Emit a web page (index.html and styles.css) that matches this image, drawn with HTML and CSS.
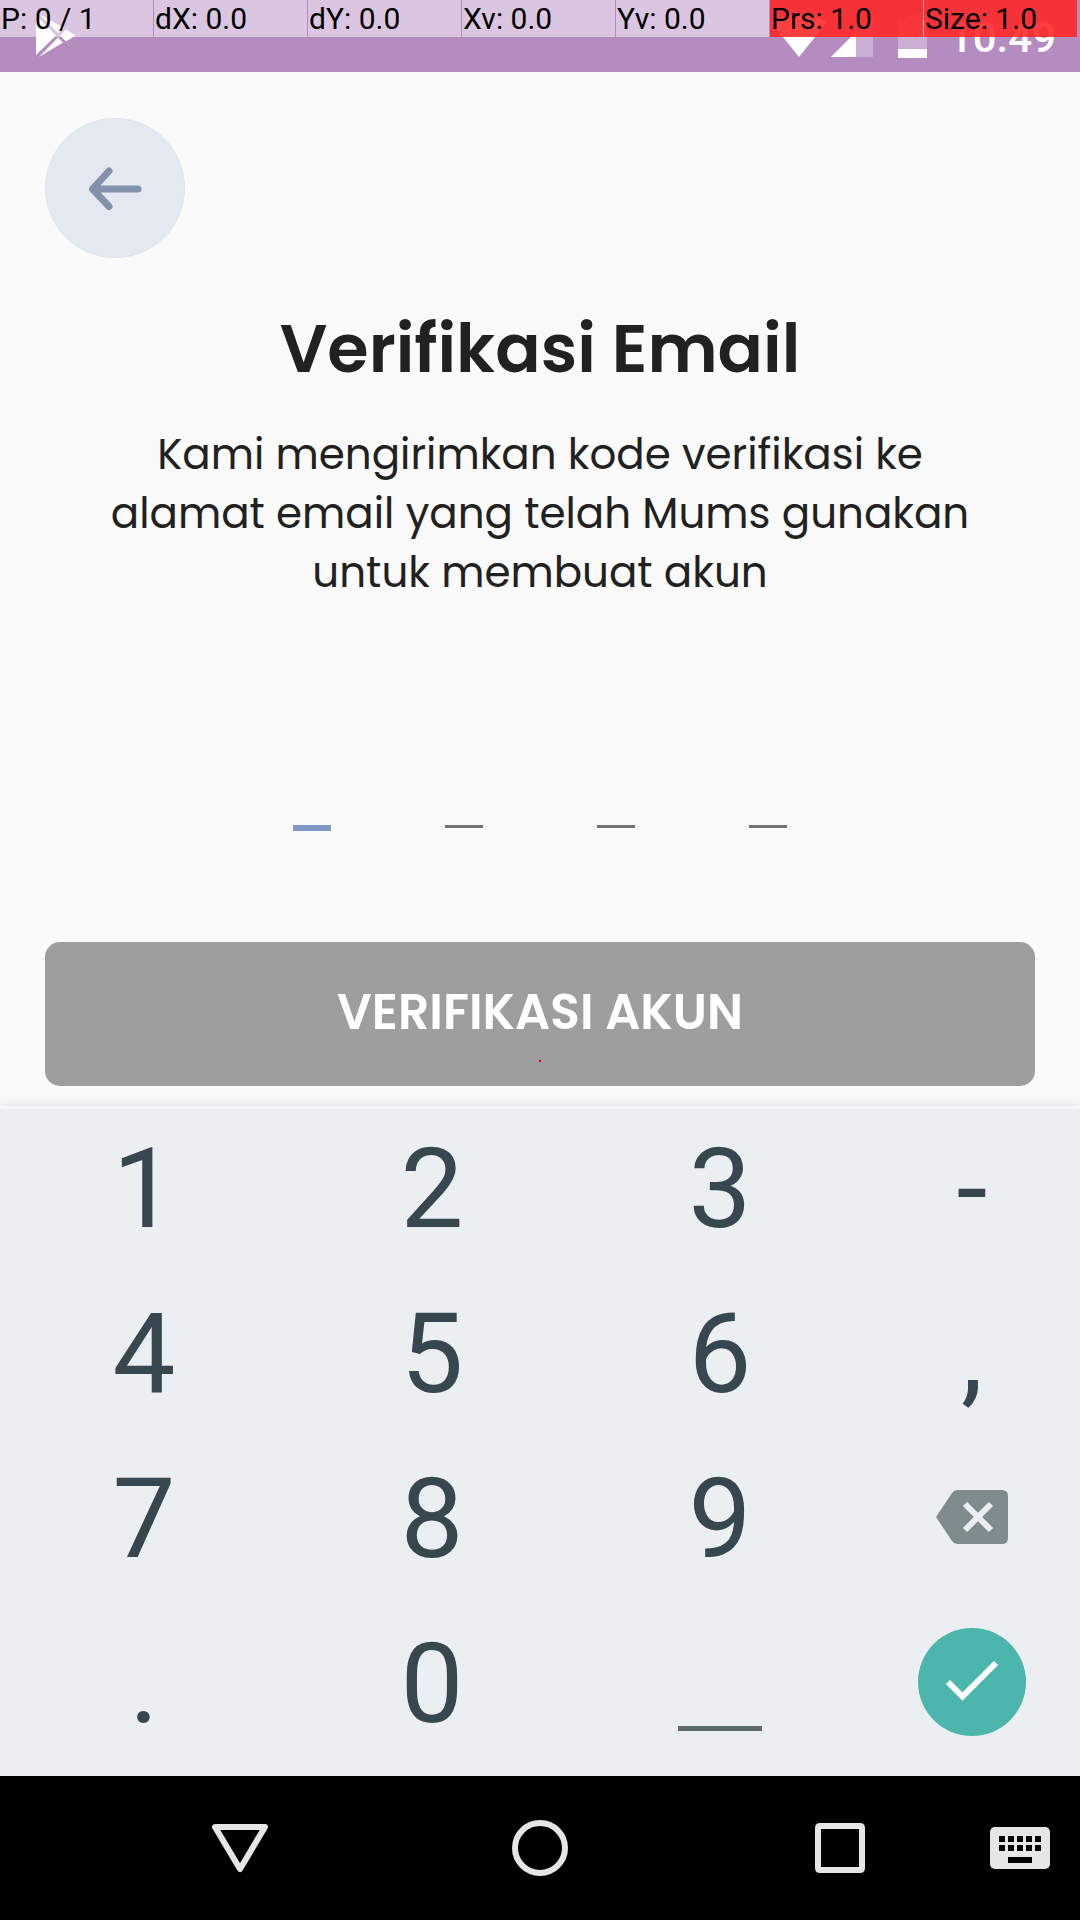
FILE: index.html
```html
<!DOCTYPE html>
<html lang="id">
<head>
<meta charset="utf-8">
<meta name="viewport" content="width=device-width, initial-scale=1">
<title>Verifikasi Email</title>
<link rel="stylesheet" href="styles.css">
</head>
<body>
<header class="status">
  <svg class="status-app" width="40" height="44" viewBox="0 0 40 44" fill="#fff" aria-hidden="true">
    <path d="M0 1v40L20 21.500zM3 0L22 19l6-5zM24 21.500l6 6 8-5q2-1 0-2l-8-5zM3 43l19-19.500 5 5z"/>
  </svg>
  <div class="status-icons">
    <svg width="56" height="44" viewBox="0 0 56 44" aria-hidden="true"><path d="M28 43L0 8Q28-8 56 8z" fill="#fff"/></svg>
    <svg class="status-signal" width="42" height="44" viewBox="0 0 42 44" aria-hidden="true"><path d="M0 43L42 1v42z" fill="#fff" opacity=".3"/><path d="M0 43L25 18v25z" fill="#fff"/></svg>
    <svg class="status-battery" width="29" height="44" viewBox="0 0 29 44" aria-hidden="true"><path d="M0 5h8V1h13v4h8v39H0z" fill="#fff" opacity=".3"/><path d="M0 35h29v9H0z" fill="#fff"/></svg>
    <span class="clock">10.49</span>
  </div>
  <div class="pointer-bar">
    <span>P: 0 / 1</span><span>dX: 0.0</span><span>dY: 0.0</span><span>Xv: 0.0</span><span>Yv: 0.0</span><span class="level">Prs: 1.0</span><span class="level">Size: 1.0</span>
  </div>
</header>

<main class="content">
  <button class="back" type="button" aria-label="Kembali">
    <svg width="54" height="44" viewBox="0 0 54 44" fill="none" stroke="#8292aa" stroke-width="7" stroke-linecap="round" stroke-linejoin="round" aria-hidden="true"><path d="M50 23H5M21 5L4.500 23 21 40.500"/><path d="M5 23l6-5v10z" fill="#8292aa" stroke-width="2"/></svg>
  </button>
  <h1 class="title">Verifikasi Email</h1>
  <p class="lead">Kami mengirimkan kode verifikasi ke<br>alamat email yang telah Mums gunakan<br>untuk membuat akun</p>
  <form class="form">
    <div class="code">
      <input class="digit digit-active" type="text" inputmode="numeric" maxlength="1" aria-label="Digit 1">
      <input class="digit" type="text" inputmode="numeric" maxlength="1" aria-label="Digit 2">
      <input class="digit" type="text" inputmode="numeric" maxlength="1" aria-label="Digit 3">
      <input class="digit" type="text" inputmode="numeric" maxlength="1" aria-label="Digit 4">
    </div>
    <button class="submit" type="submit">VERIFIKASI AKUN<span class="touch-dot"></span></button>
  </form>
</main>

<section class="keyboard" aria-label="Papan angka">
  <button type="button">1</button><button type="button">2</button><button type="button">3</button><button type="button">-</button>
  <button type="button">4</button><button type="button">5</button><button type="button">6</button><button type="button">,</button>
  <button type="button">7</button><button type="button">8</button><button type="button">9</button>
  <button class="icon-key" type="button" aria-label="Hapus">
    <svg width="72" height="54" viewBox="0 0 72 54" aria-hidden="true"><path d="M21 0h45q6 0 6 6v42q0 6-6 6H21q-3 0-5-3L0 27 16 3q2-3 5-3z" fill="#808b8f"/><path d="M29 14l26 26M55 14L29 40" stroke="#eceff1" stroke-width="6"/></svg>
  </button>
  <button type="button">.</button><button type="button">0</button>
  <button type="button" aria-label="Spasi"><span class="space"></span></button>
  <button class="icon-key" type="button" aria-label="Selesai">
    <svg width="108" height="108" viewBox="0 0 108 108" aria-hidden="true"><circle cx="54" cy="54" r="54" fill="#4db6ac"/><path d="M30 54l14.500 14.500L78 35" fill="none" stroke="#fff" stroke-width="6"/></svg>
  </button>
</section>

<nav class="navbar" aria-label="Navigasi sistem">
  <button type="button" aria-label="Tutup"><svg width="56" height="56" viewBox="0 0 56 56" fill="none" stroke="#e6e6e6" stroke-width="6" stroke-linejoin="round" aria-hidden="true"><path d="M3 7h50L28 49z"/></svg></button>
  <button type="button" aria-label="Beranda"><svg width="56" height="56" viewBox="0 0 56 56" fill="none" stroke="#e6e6e6" stroke-width="6" aria-hidden="true"><circle cx="28" cy="28" r="25"/></svg></button>
  <button type="button" aria-label="Terbaru"><svg width="50" height="50" viewBox="0 0 50 50" aria-hidden="true"><path fill="#e6e6e6" fill-rule="evenodd" d="M5 0h40q5 0 5 5v40q0 5-5 5H5q-5 0-5-5V5q0-5 5-5zM6 6v38h38V6z"/></svg></button>
  <button type="button" aria-label="Ganti papan ketik"><svg width="60" height="42" viewBox="0 0 60 42" aria-hidden="true"><rect width="60" height="42" rx="5" fill="#e6e6e6"/><path d="M9 9h6v6H9zM18 9h6v6h-6zM27 9h6v6h-6zM36 9h6v6h-6zM45 9h6v6h-6zM9 18h6v6H9zM18 18h6v6h-6zM27 18h6v6h-6zM36 18h6v6h-6zM45 18h6v6h-6zM18 30h24v6H18z"/></svg></button>
</nav>
</body>
</html>
```
FILE: styles.css
```css
* { box-sizing: border-box; }

body {
  margin: 0;
  background: #fafafa;
  color: #212121;
  font-family: Poppins, Inter, "Open Sans", sans-serif;
}

button {
  padding: 0;
  border: 0;
  background: none;
  font: inherit;
  color: inherit;
}

svg { display: block; }

/* System status bar */
.status {
  position: relative;
  display: flex;
  justify-content: space-between;
  height: 72px;
  padding: 14px 24px 0 36px;
  background: #b48cc0;
  color: #fff;
  font-family: Roboto, sans-serif;
}

.status-icons {
  display: flex;
  align-items: flex-start;
}

.status-signal { margin-left: 4px; }

.status-battery { margin: 0 22px 0 25px; }

.clock {
  font-size: 42px;
  font-weight: 500;
  line-height: 48px;
}

/* Pointer readout drawn over the status bar */
.pointer-bar {
  position: absolute;
  top: 0;
  left: 0;
  right: 0;
  display: grid;
  grid-template-columns: repeat(7, 1fr);
  column-gap: 1px;
  padding-right: 3px;
  color: #000;
  font-size: 30px;
  line-height: 37px;
}

.pointer-bar span {
  padding-left: 1px;
  background: rgba(255, 255, 255, .5);
  white-space: nowrap;
}

.pointer-bar .level {
  background-image: linear-gradient(rgba(255, 0, 0, .75), rgba(255, 0, 0, .75));
}

/* Verification form */
.content { padding: 46px 45px 20px; }

.back {
  display: flex;
  align-items: center;
  justify-content: center;
  width: 140px;
  height: 140px;
  border: 1px dotted #dcdfe5;
  border-radius: 50%;
  background: #e4e8f1;
}

.title {
  margin: 47px 0 0;
  font-size: 67px;
  font-weight: 600;
  line-height: 88px;
  text-align: center;
}

.lead {
  margin: 32px 0 0;
  font-size: 42px;
  line-height: 59px;
  text-align: center;
}

.code {
  display: flex;
  align-items: flex-start;
  justify-content: center;
  gap: 114px;
  height: 100px;
  margin-top: 128px;
}

.digit {
  box-sizing: content-box;
  width: 38px;
  height: 95px;
  padding: 0;
  border: 0;
  border-bottom: 3px solid #757575;
  border-radius: 0;
  outline: 0;
  background: none;
  font: inherit;
  font-size: 42px;
  text-align: center;
}

.digit-active { border-bottom: 6px solid #8097c4; }

.submit {
  position: relative;
  display: block;
  width: 100%;
  height: 144px;
  margin-top: 112px;
  padding-bottom: 4px;
  border-radius: 15px;
  background: #9e9e9e;
  color: #fff;
  font-size: 49px;
  font-weight: 600;
}

.touch-dot {
  position: absolute;
  left: 50%;
  bottom: 24px;
  width: 2px;
  height: 2px;
  margin-left: -1px;
  background: #f00;
}

/* Numeric keyboard */
.keyboard {
  display: grid;
  grid-template-columns: 4fr 4fr 4fr 3fr;
  grid-auto-rows: 165px;
  padding-bottom: 10px;
  background: #eceff1;
  box-shadow: inset 0 3px #f5f7f8, 0 0 12px rgba(0, 0, 0, .14);
  color: #37474f;
  font-family: Roboto, sans-serif;
  font-size: 112px;
  line-height: 165px;
}

.keyboard button {
  display: flex;
  align-items: center;
  justify-content: center;
}

.keyboard .icon-key { padding-bottom: 4px; }

.space {
  width: 84px;
  height: 5px;
  margin-top: 90px;
  background: #5b6b70;
}

/* System navigation bar */
.navbar {
  display: grid;
  grid-template-columns: 5fr 5fr 5fr 1fr;
  height: 144px;
  padding: 0 30px 0 90px;
  background: #000;
}

.navbar button {
  display: flex;
  align-items: center;
  justify-content: center;
}
```
